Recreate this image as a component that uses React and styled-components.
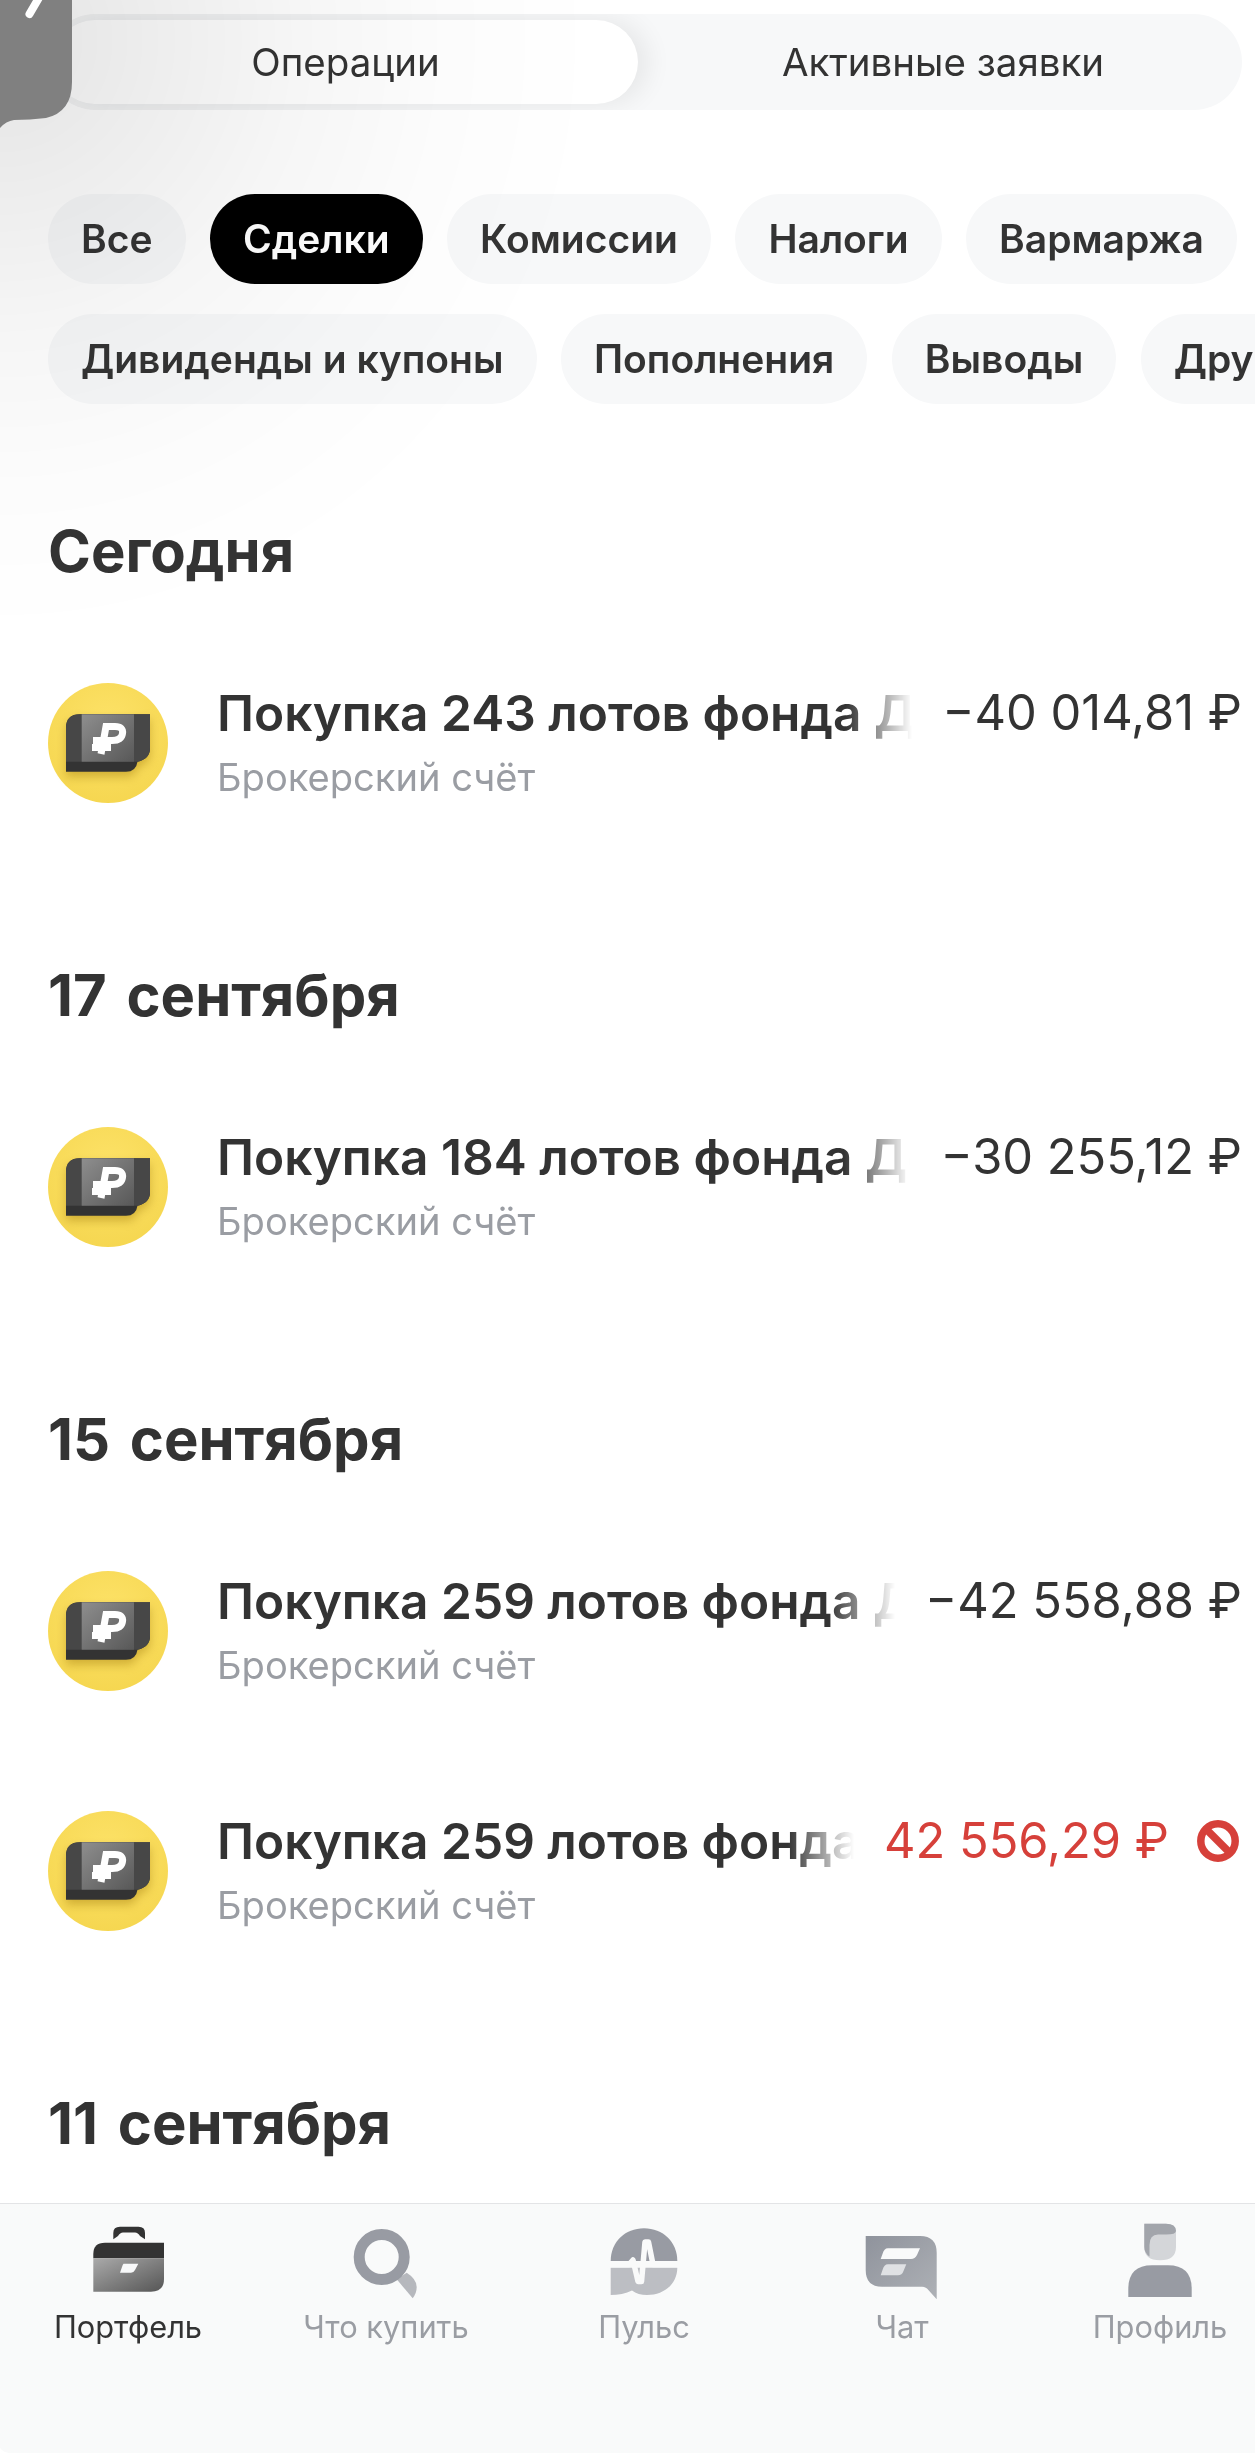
import React from "react";
import styled, { createGlobalStyle } from "styled-components";

const Global = createGlobalStyle`
  html, body { margin: 0; padding: 0; background: #fff; }
  body { font-family: Inter, "Noto Sans", "Liberation Sans", sans-serif; color: #333; }
`;

const Screen = styled.div`
  position: relative;
  width: 1255px;
  height: 2453px;
  display: flex;
  flex-direction: column;
  overflow: hidden;
  background: #fff;
`;

const Feed = styled.main`
  flex: 1;
  min-height: 0;
  overflow: hidden;
  padding: 14px 13px 0 48px;
`;

/* Soft grey glow spreading from the top left corner, above the controls */
const CornerGlow = styled.div`
  position: absolute;
  left: 0;
  top: 0;
  width: 640px;
  height: 640px;
  pointer-events: none;
  mix-blend-mode: multiply;
  background: radial-gradient(
    circle 600px at 0 40px,
    rgba(0, 0, 0, 0.11) 0%,
    rgba(0, 0, 0, 0.07) 25%,
    rgba(0, 0, 0, 0.035) 50%,
    rgba(0, 0, 0, 0.012) 75%,
    rgba(0, 0, 0, 0) 100%
  );
`;

const CornerBadge = styled.svg`
  position: absolute;
  left: 0;
  top: 0;
  width: 74px;
  height: 128px;
`;

const Segment = styled.div`
  display: grid;
  grid-template-columns: 585px 1fr;
  height: 96px;
  padding: 6px;
  margin-left: -1px;
  box-sizing: border-box;
  border-radius: 48px;
  background: #f7f8f9;
  overflow: hidden;
`;

const SegmentItem = styled.div`
  display: flex;
  align-items: center;
  justify-content: center;
  padding-left: ${(p) => (p.$active ? "0" : "12px")};
  font-size: 38.5px;
  font-weight: 400;
  color: #333;
  border-radius: 42px;
  background: ${(p) => (p.$active ? "#fff" : "transparent")};
  box-shadow: ${(p) => (p.$active ? "10px 0 26px rgba(0,0,0,.07)" : "none")};
`;

const ChipRows = styled.div`
  display: flex;
  flex-direction: column;
  gap: 30px;
  margin-top: 84px;
  margin-right: -13px;
`;

const ChipRow = styled.div`
  display: flex;
  gap: 24.5px;
  white-space: nowrap;
`;

const Chip = styled.div`
  flex: none;
  height: 90px;
  box-sizing: border-box;
  padding: 0 33px 2px;
  display: flex;
  align-items: center;
  border-radius: 45px;
  font-size: 39px;
  font-weight: 600;
  background: ${(p) => (p.$active ? "#000" : "#f7f8f9")};
  color: ${(p) => (p.$active ? "#fff" : "#333")};
`;

const DaySection = styled.section`
  margin-top: ${(p) => (p.$first ? "115px" : "160px")};
`;

const DayTitle = styled.h2`
  margin: 0;
  font-size: 58px;
  line-height: 64px;
  font-weight: 700;
  word-spacing: 6px;
  color: #333;
`;

const OperationList = styled.div`
  display: flex;
  flex-direction: column;
  gap: 120px;
  margin-top: 100px;
`;

const Operation = styled.div`
  display: flex;
  gap: 49px;
  height: 120px;
`;

const OperationBody = styled.div`
  flex: 1;
  min-width: 0;
`;

const TopLine = styled.div`
  display: flex;
  align-items: center;
  gap: 30px;
  height: 60px;
`;

const OperationTitle = styled.div`
  flex: 1;
  min-width: 0;
  overflow: hidden;
  white-space: nowrap;
  font-size: 49.6px;
  line-height: 60px;
  font-weight: 600;
  color: #333;
  -webkit-mask-image: linear-gradient(90deg, #000 calc(100% - 66px), transparent 100%);
  mask-image: linear-gradient(90deg, #000 calc(100% - 66px), transparent 100%);
`;

const Amount = styled.div`
  flex: none;
  display: flex;
  align-items: center;
  gap: 28px;
  font-size: 48.8px;
  line-height: 60px;
  font-weight: 400;
  color: ${(p) => (p.$rejected ? "#d6403a" : "#333")};
`;

const Account = styled.div`
  margin-top: 10px;
  font-size: 38.1px;
  line-height: 48px;
  color: #9a9da3;
`;

const TabBar = styled.nav`
  flex: none;
  height: 250px;
  box-sizing: border-box;
  padding-top: 19px;
  display: grid;
  grid-template-columns: repeat(5, 258px);
  margin-left: -1px;
  background: #f9fafa;
  border-top: 1px solid #e3e4e6;
  border-bottom-left-radius: 10px;
`;

const Tab = styled.div`
  display: flex;
  flex-direction: column;
  align-items: center;
  height: 120px;
  color: ${(p) => (p.$active ? "#333" : "#9a9da3")};
`;

const TabIcon = styled.svg`
  width: 80px;
  height: 80px;
  flex: none;
`;

const TabLabel = styled.div`
  margin-top: 6px;
  font-size: 30.8px;
  line-height: 36px;
  white-space: nowrap;
`;

const BrokerGlyph = styled.svg`
  flex: none;
  width: 120px;
  height: 120px;
`;

const BrokerPlate = styled.g`
  filter: drop-shadow(0 5px 5px rgba(150, 110, 0, 0.4));
`;

const DeclineGlyph = styled.svg`
  flex: none;
  width: 42px;
  height: 42px;
  margin-right: 3px;
`;

const BrokerIcon = ({ id }) => (
  <BrokerGlyph viewBox="0 0 120 120">
    <defs>
      <radialGradient id={`coin${id}`} cx="0.5" cy="0.35" r="0.7">
        <stop offset="0" stopColor="#fde268" />
        <stop offset="1" stopColor="#f5d64f" />
      </radialGradient>
      <linearGradient id={`face${id}`} x1="0" y1="0" x2="1" y2="1">
        <stop offset="0" stopColor="#8e8e8e" />
        <stop offset="1" stopColor="#585858" />
      </linearGradient>
    </defs>
    <circle cx="60" cy="60" r="60" fill={`url(#coin${id})`} />
    <BrokerPlate>
      <path d="M18 88.7V45Q18 31.3 32 31.3H102V65Q102 76 89.5 78.7Q88 88.7 78 88.7Z" fill="#333" />
    </BrokerPlate>
    <path d="M18 78.7V45Q18 31.3 32 31.3H102V65Q102 76 89.5 78.7Z" fill="#474747" />
    <rect x="33.7" y="31.3" width="52.3" height="47.4" fill={`url(#face${id})`} />
    <g fill="none" stroke="#fff" strokeWidth="7">
      <path d="M53 71L58 43.5H67Q75.5 43.5 74.5 50.5Q73.5 57.5 64 57.5H45" />
      <path d="M44 64.5H63" />
    </g>
  </BrokerGlyph>
);

const RejectedIcon = () => (
  <DeclineGlyph viewBox="0 0 42 42" fill="none" stroke="#d6403a" strokeWidth="7.5">
    <circle cx="21" cy="21" r="17.2" />
    <path d="M9 9L33 33" />
  </DeclineGlyph>
);

const PortfolioIcon = () => (
  <TabIcon viewBox="0 0 80 80">
    <defs>
      <linearGradient id="caseBody" x1="0" y1="0" x2="1" y2="1">
        <stop offset="0" stopColor="#aaa" />
        <stop offset="1" stopColor="#555" />
      </linearGradient>
    </defs>
    <path d="M25.3 16.3V10Q25.3 3.7 32 3.7H50.5Q57 3.7 57 10V16.3L52 13Q50 9.5 47 9.5H35Q32 9.5 30 13Z" fill="#333" />
    <path d="M5.3 35.3V31Q5.3 19.7 17 19.7H76V35.3Z" fill="#333" />
    <path d="M5.3 35.3H76V56Q76 68.7 63 68.7H5.3Z" fill="url(#caseBody)" />
    <path d="M35.5 40.7H50.3L47 47Q45.7 49.7 43 49.7H32L34 44Q34.7 41.5 35.5 40.7Z" fill="#f8f9fa" />
  </TabIcon>
);

const SearchIcon = () => (
  <TabIcon viewBox="0 0 80 80">
    <path d="M50.7 56.3L60.7 49.7Q70.7 56 70.7 64Q70.7 70 66.7 75.3Z" fill="#b6b8bd" />
    <circle cx="35.7" cy="34" r="22.5" fill="none" stroke="#989ba3" strokeWidth="11" />
  </TabIcon>
);

const PulseIcon = () => (
  <TabIcon viewBox="0 0 80 80">
    <path d="M6.7 38C6.7 19 21 5.3 40 5.3S73.3 19 73.3 38Z" fill="#989ba3" />
    <path d="M6.7 44.7H73.3C73.3 61 60 72 43 72C37 72 32 70.5 28 67.5C22 70.5 14 72 6.7 72Z" fill="#bcbec3" />
    <path d="M6 41.5H25L29 37L34 58.5H37.5L41 19H44.5L49 41.5H74" fill="none" stroke="#f9fafa" strokeWidth="5.5" strokeLinejoin="round" />
  </TabIcon>
);

const ChatIcon = () => (
  <TabIcon viewBox="0 0 80 80">
    <defs>
      <linearGradient id="bubble" x1="0" y1="0" x2="1" y2="1">
        <stop offset="0" stopColor="#8f939c" />
        <stop offset="1" stopColor="#aeb1b6" />
      </linearGradient>
    </defs>
    <path d="M3.7 13H58Q74.7 13 74.7 30V76.3L65 65.5Q63 63.7 60 63.7H20Q3.7 63.7 3.7 47Z" fill="url(#bubble)" />
    <path d="M26 25.3H58L55 32Q53 36 49 36H18.7L20.5 31Q22 25.3 26 25.3Z" fill="#f9fafa" />
    <path d="M26 41.3H44.3L41.5 48Q40 52.3 36 52.3H18.7L20.5 47Q22 41.3 26 41.3Z" fill="#dfe1e4" />
  </TabIcon>
);

const ProfileIcon = () => (
  <TabIcon viewBox="0 0 80 80">
    <path d="M24.3 0.7H46Q56 0.7 56 11V24Q56 37.3 40 37.3Q24.3 37.3 24.3 24Z" fill="#d4d6d9" />
    <path d="M24.3 0.7H46Q56 0.7 56 8Q56 11.5 46 11.5H38Q29.5 11.5 29.5 22V33.5Q24.3 30 24.3 24Z" fill="#a2a5ab" />
    <path d="M8.3 74V66Q8.3 42.3 32 42.3H48Q71.7 42.3 71.7 66V74Z" fill="#989ba3" />
  </TabIcon>
);

const chips = [
  [{ label: "Все" }, { label: "Сделки", active: true }, { label: "Комиссии" }, { label: "Налоги" }, { label: "Вармаржа" }],
  [{ label: "Дивиденды и купоны" }, { label: "Пополнения" }, { label: "Выводы" }, { label: "Другое" }],
];

const days = [
  { title: "Сегодня", items: [{ name: "Покупка 243 лотов фонда Доходные облигации", sum: "−40 014,81 ₽" }] },
  { title: "17 сентября", items: [{ name: "Покупка 184 лотов фонда Доходные облигации", sum: "−30 255,12 ₽" }] },
  {
    title: "15 сентября",
    items: [
      { name: "Покупка 259 лотов фонда Доходные облигации", sum: "−42 558,88 ₽" },
      { name: "Покупка 259 лотов фонда Доходные облигации", sum: "42 556,29 ₽", rejected: true },
    ],
  },
  { title: "11 сентября", items: [] },
];

const tabs = [
  { label: "Портфель", Icon: PortfolioIcon, active: true },
  { label: "Что купить", Icon: SearchIcon },
  { label: "Пульс", Icon: PulseIcon },
  { label: "Чат", Icon: ChatIcon },
  { label: "Профиль", Icon: ProfileIcon },
];

export default function App() {
  return (
    <Screen>
      <Global />
      <Feed>
        <Segment>
          <SegmentItem $active>Операции</SegmentItem>
          <SegmentItem>Активные заявки</SegmentItem>
        </Segment>
        <ChipRows>
          {chips.map((row, i) => (
            <ChipRow key={i}>
              {row.map((c) => (
                <Chip key={c.label} $active={c.active}>
                  {c.label}
                </Chip>
              ))}
            </ChipRow>
          ))}
        </ChipRows>
        {days.map((day, d) => (
          <DaySection key={day.title} $first={d === 0}>
            <DayTitle>{day.title}</DayTitle>
            {day.items.length > 0 && (
              <OperationList>
                {day.items.map((op, i) => (
                  <Operation key={i}>
                    <BrokerIcon id={`${d}-${i}`} />
                    <OperationBody>
                      <TopLine>
                        <OperationTitle>{op.name}</OperationTitle>
                        <Amount $rejected={op.rejected}>
                          <span>{op.sum}</span>
                          {op.rejected && <RejectedIcon />}
                        </Amount>
                      </TopLine>
                      <Account>Брокерский счёт</Account>
                    </OperationBody>
                  </Operation>
                ))}
              </OperationList>
            )}
          </DaySection>
        ))}
      </Feed>
      <TabBar>
        {tabs.map(({ label, Icon, active }) => (
          <Tab key={label} $active={active}>
            <Icon />
            <TabLabel>{label}</TabLabel>
          </Tab>
        ))}
      </TabBar>
      <CornerGlow />
      <CornerBadge viewBox="0 0 74 128">
        <path d="M0 0H72V82Q72 112 46 118Q30 120 14 120Q6 121 0 128Z" fill="#808080" />
        <path d="M40 -4L29.5 14" stroke="#fff" strokeWidth="8" strokeLinecap="round" fill="none" />
      </CornerBadge>
    </Screen>
  );
}
